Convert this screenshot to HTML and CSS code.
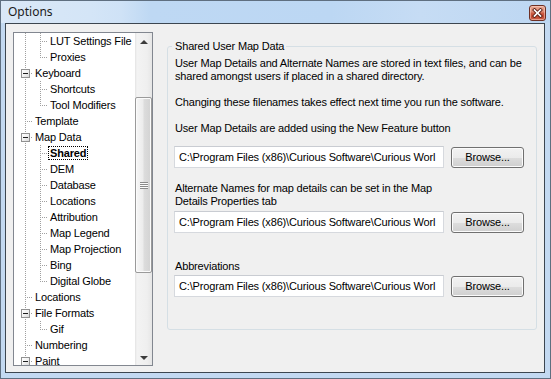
FILE: index.html
```html
<!DOCTYPE html>
<html>
<head>
<meta charset="utf-8">
<title>Options</title>
<link rel="stylesheet" href="styles.css">
</head>
<body>
<div class="window">
  <div class="titlebar">
    <span class="title">Options</span>
    <span class="close">
      <svg width="11" height="10" viewBox="0 0 11 10">
        <path d="M2.5 2 L8.5 8 M8.5 2 L2.5 8" stroke="#5a1c12" stroke-width="3.4" stroke-linecap="square" fill="none"/>
        <path d="M2.5 2 L8.5 8 M8.5 2 L2.5 8" stroke="#ffffff" stroke-width="1.7" stroke-linecap="square" fill="none"/>
      </svg>
    </span>
  </div>
  <div class="client">
    <div class="tree">
      <div class="tree-rows">
        <div class="row"><span class="g g-line"></span><span class="g g-tee"></span><span class="label">LUT Settings File</span></div>
        <div class="row"><span class="g g-line"></span><span class="g g-ell"></span><span class="label">Proxies</span></div>
        <div class="row"><span class="g g-tee"><span class="exp"></span></span><span class="label">Keyboard</span></div>
        <div class="row"><span class="g g-line"></span><span class="g g-tee"></span><span class="label">Shortcuts</span></div>
        <div class="row"><span class="g g-line"></span><span class="g g-ell"></span><span class="label">Tool Modifiers</span></div>
        <div class="row"><span class="g g-tee"></span><span class="label">Template</span></div>
        <div class="row"><span class="g g-tee"><span class="exp"></span></span><span class="label">Map Data</span></div>
        <div class="row"><span class="g g-line"></span><span class="g g-tee"></span><span class="label selected">Shared</span></div>
        <div class="row"><span class="g g-line"></span><span class="g g-tee"></span><span class="label">DEM</span></div>
        <div class="row"><span class="g g-line"></span><span class="g g-tee"></span><span class="label">Database</span></div>
        <div class="row"><span class="g g-line"></span><span class="g g-tee"></span><span class="label">Locations</span></div>
        <div class="row"><span class="g g-line"></span><span class="g g-tee"></span><span class="label">Attribution</span></div>
        <div class="row"><span class="g g-line"></span><span class="g g-tee"></span><span class="label">Map Legend</span></div>
        <div class="row"><span class="g g-line"></span><span class="g g-tee"></span><span class="label">Map Projection</span></div>
        <div class="row"><span class="g g-line"></span><span class="g g-tee"></span><span class="label">Bing</span></div>
        <div class="row"><span class="g g-line"></span><span class="g g-ell"></span><span class="label">Digital Globe</span></div>
        <div class="row"><span class="g g-tee"></span><span class="label">Locations</span></div>
        <div class="row"><span class="g g-tee"><span class="exp"></span></span><span class="label">File Formats</span></div>
        <div class="row"><span class="g g-line"></span><span class="g g-ell"></span><span class="label">Gif</span></div>
        <div class="row"><span class="g g-tee"></span><span class="label">Numbering</span></div>
        <div class="row"><span class="g g-tee"><span class="exp"></span></span><span class="label">Paint</span></div>
      </div>
      <div class="vscroll">
        <div class="sb-btn sb-up"><span class="arrow-up"></span></div>
        <div class="sb-track">
          <div class="sb-thumb"><span class="grip"></span></div>
        </div>
        <div class="sb-btn sb-down"><span class="arrow-down"></span></div>
      </div>
    </div>
    <div class="panel">
      <fieldset class="group">
        <legend>Shared User Map Data</legend>
        <p class="info">User Map Details and Alternate Names are stored in text files, and can be<br>shared amongst users if placed in a shared directory.</p>
        <p class="info gap">Changing these filenames takes effect next time you run the software.</p>
        <p class="info gap">User Map Details are added using the New Feature button</p>
        <div class="file-row first">
          <div class="textbox">C:\Program Files (x86)\Curious Software\Curious Worl</div>
          <button class="btn">Browse...</button>
        </div>
        <p class="info label2">Alternate Names for map details can be set in the Map<br>Details Properties tab</p>
        <div class="file-row tight">
          <div class="textbox">C:\Program Files (x86)\Curious Software\Curious Worl</div>
          <button class="btn">Browse...</button>
        </div>
        <p class="info label3">Abbreviations</p>
        <div class="file-row tight2">
          <div class="textbox">C:\Program Files (x86)\Curious Software\Curious Worl</div>
          <button class="btn">Browse...</button>
        </div>
      </fieldset>
    </div>
  </div>
</div>
</body>
</html>
```

FILE: styles.css
```css
* { box-sizing: border-box; }

html, body {
  margin: 0;
  padding: 0;
}

body {
  width: 551px;
  height: 379px;
  overflow: hidden;
  background: #c4daf2;
  font-family: "Liberation Sans", Arial, sans-serif;
  font-size: 11px;
  letter-spacing: -0.16px;
  color: #000;
}

.window {
  width: 551px;
  height: 379px;
  border: 1px solid #5f6f80;
  background: #c3d9f1;
  display: flex;
  flex-direction: column;
}

/* ---------- title bar ---------- */
.titlebar {
  height: 22px;
  flex: none;
  display: flex;
  align-items: flex-start;
  justify-content: space-between;
  background: linear-gradient(to right, #dae8f7 0, #d4e5f7 90px, #cfe2f6 120px, #bed8f3 150px, #bcd7f3 330px, #c6dcf4 420px, #bdd7f2 100%);
}

.title {
  font-family: "Noto Sans", "Open Sans", sans-serif;
  font-size: 12px;
  letter-spacing: 0;
  line-height: 16px;
  margin: 3px 0 0 7px;
  color: #1b1b1b;
}

.close {
  width: 17px;
  height: 16px;
  margin: 4px 4px 0 0;
  border: 1px solid #6e3024;
  border-radius: 3px;
  background: linear-gradient(#eaa995 0, #dc8a73 40%, #c9563d 55%, #c24a32 80%, #d06a50 100%);
  box-shadow: inset 0 0 0 1px rgba(255, 220, 210, 0.5);
  display: flex;
  align-items: center;
  justify-content: center;
}

/* ---------- client area ---------- */
.client {
  flex: 1;
  margin: 0 5px 5px 4px;
  border: 1px solid #3c4650;
  background: #f0f0f0;
  display: flex;
  align-items: flex-start;
}

/* ---------- tree ---------- */
.tree {
  width: 140px;
  height: 334px;
  flex: none;
  margin: 8px 0 0 7px;
  border: 1px solid #828790;
  background: #fff;
  display: flex;
  overflow: hidden;
}

.tree-rows {
  flex: 1;
  min-width: 0;
  padding-left: 4px;
  overflow: hidden;
}

.row {
  height: 16px;
  display: flex;
  align-items: center;
}

.g {
  width: 15px;
  height: 16px;
  flex: none;
  display: flex;
  align-items: center;
  justify-content: center;
}

.g-line {
  background: repeating-linear-gradient(to bottom, #a0a0a0 0 1px, transparent 1px 2px) 7px 0 / 1px 16px no-repeat;
}

.g-tee {
  background:
    repeating-linear-gradient(to bottom, #a0a0a0 0 1px, transparent 1px 2px) 7px 0 / 1px 16px no-repeat,
    repeating-linear-gradient(to right, #a0a0a0 0 1px, transparent 1px 2px) 9px 8px / 6px 1px no-repeat;
}

.g-ell {
  background:
    repeating-linear-gradient(to bottom, #a0a0a0 0 1px, transparent 1px 2px) 7px 0 / 1px 9px no-repeat,
    repeating-linear-gradient(to right, #a0a0a0 0 1px, transparent 1px 2px) 9px 8px / 6px 1px no-repeat;
}

.exp {
  width: 9px;
  height: 9px;
  margin-top: 1px;
  border: 1px solid #919191;
  background:
    linear-gradient(#1e1e1e, #1e1e1e) center / 5px 1px no-repeat,
    linear-gradient(135deg, #ffffff 0, #f2f2f2 50%, #d8d8d8 100%);
}

.label {
  white-space: nowrap;
  line-height: 12px;
  padding: 0 1px;
  border: 1px dotted transparent;
}

.label.selected {
  font-weight: bold;
  border-color: #000;
}

/* ---------- scrollbar ---------- */
.vscroll {
  width: 17px;
  flex: none;
  display: flex;
  flex-direction: column;
  background: linear-gradient(to right, #e3e3e3 0, #f3f3f3 2px, #efefef 12px, #e6e6e6 100%);
}

.sb-btn {
  height: 17px;
  flex: none;
  display: flex;
  align-items: center;
  justify-content: center;
}

.arrow-up {
  width: 0;
  height: 0;
  border-left: 4px solid transparent;
  border-right: 4px solid transparent;
  border-bottom: 4px solid #3c3c3c;
  margin-top: 1px;
}

.arrow-down {
  width: 0;
  height: 0;
  border-left: 4px solid transparent;
  border-right: 4px solid transparent;
  border-top: 4px solid #3c3c3c;
  margin-top: 3px;
}

.sb-track {
  flex: 1;
  padding: 47px 0 0 0;
}

.sb-thumb {
  height: 176px;
  border: 1px solid #9a9a9a;
  border-radius: 2px;
  background: linear-gradient(to right, #f7f7f7 0, #ececec 45%, #dcdcdc 55%, #d2d2d2 100%);
  box-shadow: inset 0 0 0 1px #fbfbfb;
  display: flex;
  align-items: center;
  justify-content: center;
}

.grip {
  width: 8px;
  height: 7px;
  background: repeating-linear-gradient(to bottom, #8a8a8a 0 1px, #fbfbfb 1px 2px);
}

/* ---------- right panel ---------- */
.panel {
  flex: 1;
  padding: 16px 7px 0 14px;
}

.group {
  margin: 0;
  min-width: 0;
  padding: 4px 6px 32px 6px;
  border: 1px solid #d5dfe5;
  border-radius: 3px;
}

.group legend {
  padding: 0 2px 0 3px;
  margin-left: -2px;
  line-height: 13px;
}

.info {
  margin: 0;
  padding-left: 1px;
  line-height: 13px;
  white-space: nowrap;
}

.info.gap {
  margin-top: 13px;
}

.info.label2 {
  margin-top: 14px;
}

.info.label3 {
  margin-top: 27px;
}

.file-row {
  display: flex;
  align-items: flex-start;
}

.file-row.first {
  margin-top: 11px;
}

.file-row.tight {
  margin-top: 3px;
}

.file-row.tight2 {
  margin-top: 2px;
}

.textbox {
  width: 270px;
  height: 22px;
  flex: none;
  border: 1px solid #d6d9de;
  border-top-color: #c9ccd2;
  background: #fff;
  padding: 0 4px;
  line-height: 20px;
  white-space: nowrap;
  overflow: hidden;
}

.btn {
  width: 73px;
  height: 21px;
  margin: 1px 0 0 7px;
  padding: 0;
  border: 1px solid #707070;
  border-radius: 3px;
  background: linear-gradient(#f2f2f2 0%, #ebebeb 50%, #dddddd 51%, #cfcfcf 100%);
  box-shadow: inset 0 0 0 1px #fbfbfb;
  font-family: "Liberation Sans", Arial, sans-serif;
  font-size: 11px;
  letter-spacing: -0.16px;
  color: #000;
  line-height: 19px;
}
```
